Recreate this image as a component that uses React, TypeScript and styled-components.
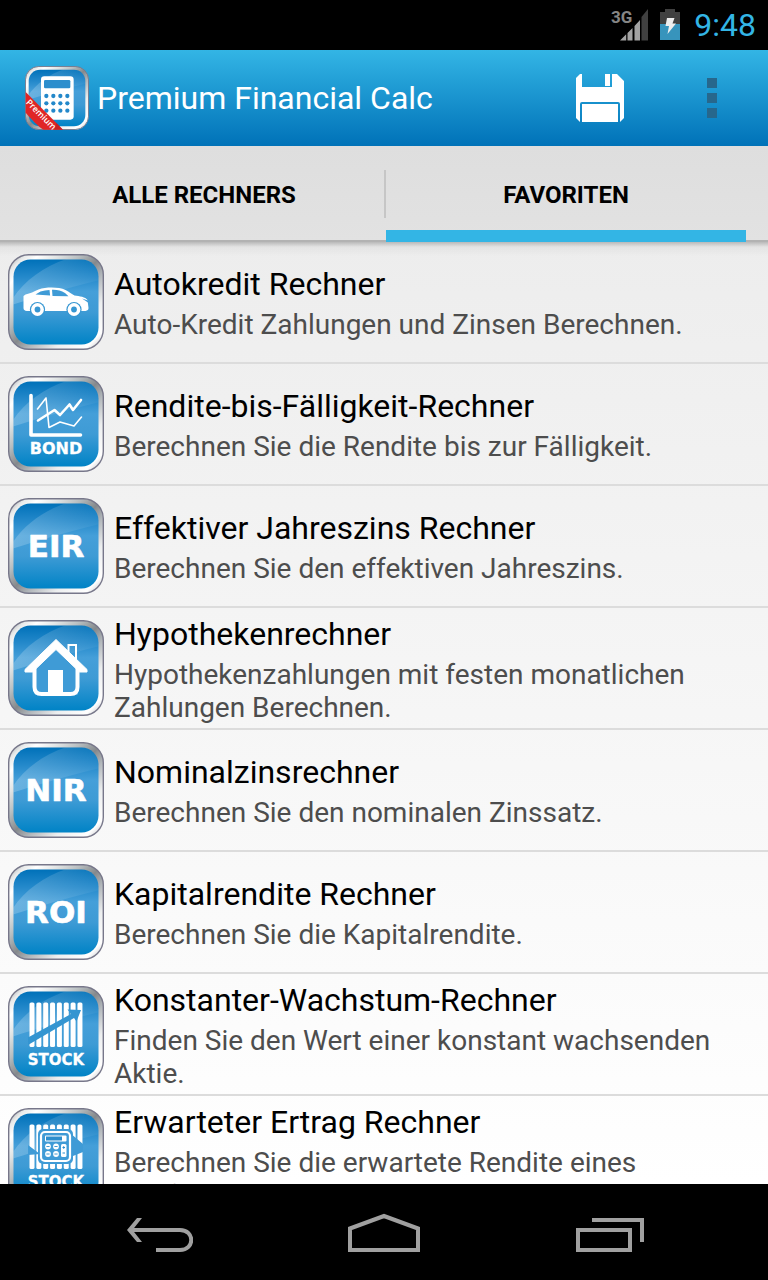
import React from "react";
import styled, { createGlobalStyle } from "styled-components";

const Global = createGlobalStyle`
  *, *::before, *::after { box-sizing: border-box; }
  body { margin: 0; background: #000; font-family: Roboto, "Liberation Sans", sans-serif; }
  button { font: inherit; color: inherit; border: 0; padding: 0; background: none; cursor: pointer; }
  svg { display: block; flex: none; }
`;

const Screen = styled.div`
  height: 100vh;
  display: flex;
  flex-direction: column;
  overflow: hidden;
`;

const StatusBar = styled.div`
  height: 50px;
  flex: none;
  display: flex;
  align-items: center;
  justify-content: flex-end;
  padding-right: 12px;
  background: #000;
`;

const StatusIcons = styled.div`
  display: flex;
  align-items: center;
  gap: 10px;
`;

const Clock = styled.time`
  margin-left: 14px;
  font-size: 32px;
  line-height: 50px;
  color: #33b5e5;
`;

const ActionBar = styled.header`
  height: 96px;
  flex: none;
  display: flex;
  align-items: center;
  padding-left: 25px;
  background: linear-gradient(#33b5e5, #0072b8);
`;

const AppTitle = styled.h1`
  flex: 1;
  margin: 0 0 0 8px;
  font-size: 32px;
  line-height: 40px;
  font-weight: 400;
  color: #fff;
`;

const ActionButton = styled.button`
  width: 112px;
  height: 96px;
  display: grid;
  place-items: center;
`;

const TabBar = styled.nav`
  height: 96px;
  flex: none;
  display: flex;
  padding: 0 22px 0 24px;
  background: linear-gradient(#dedede, #e2e2e2);
  box-shadow: inset 0 -2px #b2b2b2;
`;

const Divider = styled.span`
  width: 2px;
  height: 48px;
  margin-top: 24px;
  background: #c6c6c6;
`;

const Tab = styled.button<{ $active?: boolean }>`
  flex: 1 1 0;
  padding-top: 14px;
  border-bottom: 12px solid ${(p) => (p.$active ? "#33b5e5" : "transparent")};
  font-size: 24px;
  line-height: 28px;
  font-weight: 700;
  color: #000;
`;

const List = styled.ul`
  flex: 1;
  min-height: 0;
  overflow: hidden;
  margin: 0;
  padding: 0;
  list-style: none;
  background: linear-gradient(rgba(0, 0, 0, 0.22), rgba(0, 0, 0, 0.04) 5px, rgba(0, 0, 0, 0)) top / 100% 14px no-repeat,
    linear-gradient(#ededed, #ffffff);
`;

const Row = styled.li`
  height: 122px;
  display: flex;
  align-items: center;
  gap: 10px;
  padding: 0 8px;
  border-bottom: 2px solid #dcdcdc;
`;

const RowText = styled.div`
  flex: 1;
  display: flex;
  flex-direction: column;
  gap: 5px;
  padding-top: 2px;
`;

const RowTitle = styled.h2`
  margin: 0;
  font-size: 32px;
  line-height: 38px;
  font-weight: 400;
  color: #000;
`;

const RowSummary = styled.p`
  margin: 0;
  font-size: 28px;
  line-height: 33px;
  color: #4d4d4d;
`;

const NavBar = styled.footer`
  height: 96px;
  flex: none;
  display: flex;
  justify-content: center;
  background: #000;
`;

const NavButton = styled.button`
  flex: 0 1 224px;
  display: grid;
  place-items: center;
`;

const HiddenDefs = styled.svg`
  position: absolute;
`;

const ArtText = styled.text`
  font-family: "DejaVu Sans", sans-serif;
  font-weight: 700;
  text-anchor: middle;
  fill: #fff;
  stroke: #fff;
  stroke-linejoin: round;
`;

const RibbonText = styled.text`
  font-family: "Open Sans", sans-serif;
  font-size: 13px;
  font-weight: 600;
  text-anchor: middle;
  fill: #fff;
`;

function Defs() {
  return (
    <HiddenDefs width="0" height="0" aria-hidden="true">
      <defs>
        <linearGradient id="metal" x1="0" y1="0" x2="1" y2="1">
          <stop offset="0" stopColor="#8d9296" />
          <stop offset=".09" stopColor="#e8eaea" />
          <stop offset=".16" stopColor="#ffffff" />
          <stop offset=".26" stopColor="#e3e6e6" />
          <stop offset=".38" stopColor="#b9bfc1" />
          <stop offset=".5" stopColor="#85898c" />
          <stop offset=".6" stopColor="#b3b8bc" />
          <stop offset=".74" stopColor="#eceeef" />
          <stop offset=".9" stopColor="#ffffff" />
          <stop offset="1" stopColor="#b5b8bd" />
        </linearGradient>
        <linearGradient id="blue" x1="0" y1="0" x2="0" y2="1">
          <stop offset="0" stopColor="#0071b9" />
          <stop offset=".2" stopColor="#2388ca" />
          <stop offset=".38" stopColor="#459fd9" />
          <stop offset=".62" stopColor="#3e9bd5" />
          <stop offset="1" stopColor="#0083c6" />
        </linearGradient>
        <linearGradient id="shine" x1="0" y1="0" x2="1" y2="0">
          <stop offset="0" stopColor="#fff" stopOpacity=".22" />
          <stop offset="1" stopColor="#fff" stopOpacity=".03" />
        </linearGradient>
        <clipPath id="face">
          <rect x="5.500" y="5.500" width="85" height="85" rx="17" />
        </clipPath>
      </defs>
    </HiddenDefs>
  );
}

function Badge({ size = 96, children }: { size?: number; children: React.ReactNode }) {
  return (
    <svg width={size} height={size} viewBox="0 0 96 96" aria-hidden="true">
      <rect x=".7" y=".7" width="94.600" height="94.600" rx="20" fill="url(#metal)" stroke="#77778a" strokeWidth="1.400" />
      <rect x="5.500" y="5.500" width="85" height="85" rx="17" fill="url(#blue)" />
      <path clipPath="url(#face)" d="M0 52C12 30 34 12 62 4H96V25C62 33 28 43 0 52Z" fill="url(#shine)" />
      {children}
    </svg>
  );
}

const Car = () => (
  <>
    <path
      fill="#fff"
      d="M15.500 42l2-1.500c5-1 8-3 13-5 8-2.600 20-2.600 27 .5 4 2 6 4 9 5.500 5 .6 11 1.500 13 4.500l1 8c0 1.800-1 2.600-3 3H19c-2.500-.3-3.500-1.300-3.500-3z"
    />
    <path fill="#3f9bd6" d="M27.500 40.500l5-3c3-1 6-1.400 9-1.600l.6 5.700zM44 35.700c5-.2 9 .6 13 3.300l3.500 3.200-16-.3zM74 44.500l6 2v2z" />
    {[29.5, 66].map((x) => (
      <g key={x}>
        <circle cx={x} cy="55.500" r="7.600" fill="#3596d2" />
        <circle cx={x} cy="55.500" r="6.400" fill="#fff" />
        <circle cx={x} cy="55.500" r="2.900" fill="#3596d2" />
      </g>
    ))}
  </>
);

const Bond = () => (
  <>
    <g fill="none" stroke="#fff" strokeLinecap="round" strokeLinejoin="round">
      <path strokeWidth="3.600" d="M23 19.500V59H72.500" />
      <path strokeWidth="2.600" d="M30 44.500L46.500 34l5.500 5 9.500-10.500L65 34l8-10" />
      <path strokeWidth="1.600" d="M29.500 33l8.500-11L41 51.500l11-5.500 14 4 7.500-9" />
    </g>
    <ArtText x="48" y="77.500" fontSize="16" strokeWidth=".3">BOND</ArtText>
  </>
);

const Word = ({ children }: { children: string }) => (
  <ArtText x="48" y="59" fontSize="31" strokeWidth=".6">{children}</ArtText>
);

const House = () => (
  <>
    <rect x="60.500" y="25" width="7.500" height="18" fill="none" stroke="#fff" strokeWidth="2" />
    <path fill="#3f9bd6" d="M27 48L48 27l22 21v27H27z" />
    <path fill="none" stroke="#fff" strokeWidth="4" d="M26.500 48v19q0 7 7 7h29q7 0 7-7V48" />
    <path fill="#fff" d="M48 19.500l31 30v2.500h-7.500L48 29.500 24.500 52H17v-2.500z" strokeLinejoin="round" stroke="#fff" strokeWidth="1" />
    <path fill="#fff" d="M40 50h15v24H40z" />
  </>
);

const Bars = () => (
  <g fill="#fff">
    {[0, 1, 2, 3, 4, 5, 6, 7].map((i) => (
      <rect key={i} x={21.5 + i * 6.85} y="16.500" width="5" height="44.500" rx="1.600" />
    ))}
  </g>
);

const StockLabel = () => (
  <ArtText x="48" y="79" fontSize="15" strokeWidth=".3">STOCK</ArtText>
);

const StockGrowth = () => (
  <>
    <Bars />
    <path fill="#3495d1" d="M20 51.500L63 28l-3.500-4.500L73 24l-4.500 11.500-2.500-3.500L20 59z" />
    <StockLabel />
  </>
);

const StockReturn = () => (
  <>
    <Bars />
    <path fill="#3f9bd6" d="M20 37l12 9-12 1zM62 25l13 11v8L60 50z" />
    <rect x="30" y="21" width="35" height="35" rx="5" fill="#3f9bd6" />
    <rect x="33" y="24" width="29" height="29" rx="4" fill="#3f9bd6" stroke="#fff" strokeWidth="2.200" />
    <rect x="37" y="27.500" width="21.500" height="6" rx="1" fill="#fff" />
    <rect x="38" y="28.500" width="16" height="4" fill="#2c8ecd" />
    <rect x="53" y="36" width="5.500" height="13" rx="1.500" fill="#fff" />
    <path stroke="#2c8ecd" strokeWidth="1" d="M54.500 39.500h2.500M54.500 45h2.500M55.700 38.200v2.600" />
    {[[40, 38.5], [48, 38.5], [40, 46], [48, 46]].map(([x, y]) => (
      <g key={`${x}-${y}`}>
        <circle cx={x} cy={y} r="2.900" fill="#fff" />
        <path stroke="#2c8ecd" strokeWidth=".9" d={`M${x - 1.6} ${y}h3.2`} />
      </g>
    ))}
    <StockLabel />
  </>
);

const AppIcon = () => (
  <Badge size={64}>
    <rect x="24" y="15.500" width="49" height="65" rx="5" fill="#fff" />
    <rect x="28.500" y="21" width="39.500" height="12.500" rx="2" fill="#2c8ecd" />
    {[45, 56, 67].map((y) =>
      [32, 42.5, 53, 63.5].map((x) => <circle key={`${x}-${y}`} cx={x} cy={y} r="3.200" fill="#2388ca" />)
    )}
    <path fill="#e02526" d="M1 39L57 95.500H28C22 93 8 78 1 70z" />
    <path fill="#b81c1f" d="M47 85l10 10.500H44z" opacity=".6" />
    <RibbonText transform="translate(21 76) rotate(45)">Premium</RibbonText>
  </Badge>
);

const Signal = () => (
  <svg width="42" height="38" viewBox="0 0 42 38" role="img" aria-label="3G">
    <text x="3" y="17" fontSize="17" fontWeight="700" fill="#858585">3G</text>
    <path fill="#a3a3a3" d="M12 34.500l6.200-6.200v6.200zM19.500 34.500V27l5-5v12.500zM26.500 34.500V20l5.500-6v20.500z" />
    <path fill="#404040" d="M33.500 34.500V11l6.500-8v31.500z" />
  </svg>
);

const Battery = () => (
  <svg width="20" height="32" viewBox="0 0 20 32" role="img" aria-label="Akku">
    <path fill="#404040" d="M5 0h10v3h5v13H0V3h5z" />
    <path fill="#3794bc" d="M0 15h20v16H0z" />
    <path fill="#eee" d="M7 9h7.500l-2 5.500H16L7.500 25 9 17H5.500z" />
  </svg>
);

const items = [
  { title: "Autokredit Rechner", text: "Auto-Kredit Zahlungen und Zinsen Berechnen.", art: <Car /> },
  { title: "Rendite-bis-Fälligkeit-Rechner", text: "Berechnen Sie die Rendite bis zur Fälligkeit.", art: <Bond /> },
  { title: "Effektiver Jahreszins Rechner", text: "Berechnen Sie den effektiven Jahreszins.", art: <Word>EIR</Word> },
  { title: "Hypothekenrechner", text: "Hypothekenzahlungen mit festen monatlichen Zahlungen Berechnen.", art: <House /> },
  { title: "Nominalzinsrechner", text: "Berechnen Sie den nominalen Zinssatz.", art: <Word>NIR</Word> },
  { title: "Kapitalrendite Rechner", text: "Berechnen Sie die Kapitalrendite.", art: <Word>ROI</Word> },
  { title: "Konstanter-Wachstum-Rechner", text: "Finden Sie den Wert einer konstant wachsenden Aktie.", art: <StockGrowth /> },
  { title: "Erwarteter Ertrag Rechner", text: "Berechnen Sie die erwartete Rendite eines Portfolios.", art: <StockReturn /> },
];

export default function App() {
  return (
    <Screen>
      <Global />
      <Defs />
      <StatusBar>
        <StatusIcons>
          <Signal />
          <Battery />
        </StatusIcons>
        <Clock>9:48</Clock>
      </StatusBar>
      <ActionBar>
        <AppIcon />
        <AppTitle>Premium Financial Calc</AppTitle>
        <ActionButton aria-label="Speichern">
          <svg width="48" height="50" viewBox="0 0 48 50">
            <path fill="#fff" d="M4 1h2v13h30V1h5l7 7v37l-4 4V31q0-2-2-2H6q-2 0-2 2v18l-4-4V5z" />
            <path fill="#fff" d="M29 1h5v12h-5zM6 31h36v18H6z" />
          </svg>
        </ActionButton>
        <ActionButton aria-label="Mehr">
          <svg width="10" height="40" viewBox="0 0 10 40">
            <path fill="#27678c" d="M0 0h10v10H0zM0 15h10v10H0zM0 30h10v10H0z" />
          </svg>
        </ActionButton>
      </ActionBar>
      <TabBar>
        <Tab>ALLE RECHNERS</Tab>
        <Divider />
        <Tab $active>FAVORITEN</Tab>
      </TabBar>
      <List>
        {items.map((item) => (
          <Row key={item.title}>
            <Badge>{item.art}</Badge>
            <RowText>
              <RowTitle>{item.title}</RowTitle>
              <RowSummary>{item.text}</RowSummary>
            </RowText>
          </Row>
        ))}
      </List>
      <NavBar>
        <NavButton aria-label="Zurück">
          <svg width="66" height="40" viewBox="0 0 66 40">
            <path fill="#a0a0a0" d="M10 6h5L5.500 18 15 30h-5L0 18z" />
            <path fill="none" stroke="#a0a0a0" strokeWidth="4" d="M4 18H53C68 18 68 38 53 38H29" />
          </svg>
        </NavButton>
        <NavButton aria-label="Start">
          <svg width="72" height="40" viewBox="0 0 72 40" fill="none" stroke="#a0a0a0" strokeWidth="4">
            <path d="M2 16.500L36 4l34 12.500V38H2z" />
          </svg>
        </NavButton>
        <NavButton aria-label="Letzte Apps">
          <svg width="72" height="40" viewBox="0 0 72 40" fill="none" stroke="#a0a0a0" strokeWidth="4">
            <path d="M6 18h52v20H6zM20 8h50v22" />
          </svg>
        </NavButton>
      </NavBar>
    </Screen>
  );
}
